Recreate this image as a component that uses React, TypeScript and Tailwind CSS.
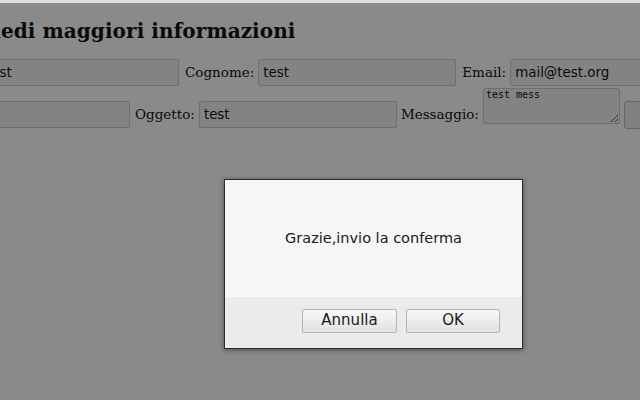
import { useState } from 'react';

const serif = { fontFamily: '"DejaVu Serif", serif' };
const sans = { fontFamily: '"DejaVu Sans", sans-serif' };

function Field({ value, w }: { value: string; w: string }) {
  return (
    <input
      readOnly
      value={value}
      style={sans}
      className={`${w} h-[27px] shrink-0 border border-[#cdcdcd] rounded-[2px] bg-[#f3f3f3] px-[4px] text-[13.4px] text-[#111] outline-none`}
    />
  );
}

export default function App() {
  const [open, setOpen] = useState(true);

  return (
    <div className="w-[640px] h-[400px] overflow-hidden bg-white flex flex-col">
      <div className="h-[3px] shrink-0 bg-[#dedede]" />
      <div className="relative flex-1">
        {/* the request form */}
        <div style={serif} className="pt-[15px] text-[#111]">
          <h2 className="ml-[-58px] text-[20px] font-bold leading-[26px] tracking-[0.08px] whitespace-nowrap">Richiedi maggiori informazioni</h2>
          <div className="mt-[15px] ml-[-19px] h-[27px] flex items-center gap-[4px] text-[13.5px] whitespace-nowrap">
            <Field value="test" w="w-[198px]" />
            <span className="ml-[2px]">Cognome:</span>
            <Field value="test" w="w-[198px]" />
            <span className="ml-[2px]">Email:</span>
            <Field value="mail@test.org" w="w-[200px]" />
          </div>
          <div className="mt-[15px] ml-[-69px] h-[27px] flex items-center gap-[4px] text-[13.5px] whitespace-nowrap">
            <Field value="" w="w-[199px]" />
            <span className="ml-[1px]">Oggetto:</span>
            <Field value="test" w="w-[198px]" />
            <span>Messaggio:</span>
            <textarea
              readOnly
              value="test mess"
              className="w-[137px] h-[36px] shrink-0 mb-[18px] border border-[#cdcdcd] rounded-[2px] bg-[#f3f3f3] px-[2px] py-0 text-[10px] leading-[12px] text-[#111] font-['DejaVu_Sans_Mono',monospace] outline-none"
            />
            <button
              style={sans}
              className="h-[28px] px-[18px] shrink-0 border border-[#bdbdbd] rounded-[3px] bg-[#efefef] text-[13px]"
            >
              Invia
            </button>
          </div>
        </div>

        {open && (
          <>
            <div className="absolute inset-0 bg-black/[0.46]" />
            <div
              style={sans}
              className="absolute left-[224px] top-[176px] w-[299px] h-[170px] flex flex-col border border-[#2b2b2b] bg-[#f6f6f6] shadow-[0_1px_5px_rgba(0,0,0,0.45)]"
            >
              <div className="flex-1 flex items-center justify-center text-[14.5px] text-[#1a1a1a]">
                Grazie,invio la conferma
              </div>
              <div className="h-[51px] shrink-0 bg-[#ebebeb] flex items-center justify-end gap-[9px] pr-[22px] pb-[4px]">
                <button
                  onClick={() => setOpen(false)}
                  className="w-[95px] h-[24px] border border-[#b4b4b4] rounded-[2px] bg-gradient-to-b from-[#f8f8f8] to-[#e1e1e1] text-[15px] text-[#1a1a1a] leading-none"
                >
                  Annulla
                </button>
                <button
                  onClick={() => setOpen(false)}
                  className="w-[94px] h-[24px] border border-[#b4b4b4] rounded-[2px] bg-gradient-to-b from-[#f8f8f8] to-[#e1e1e1] text-[15px] text-[#1a1a1a] leading-none"
                >
                  OK
                </button>
              </div>
            </div>
          </>
        )}
      </div>
    </div>
  );
}
